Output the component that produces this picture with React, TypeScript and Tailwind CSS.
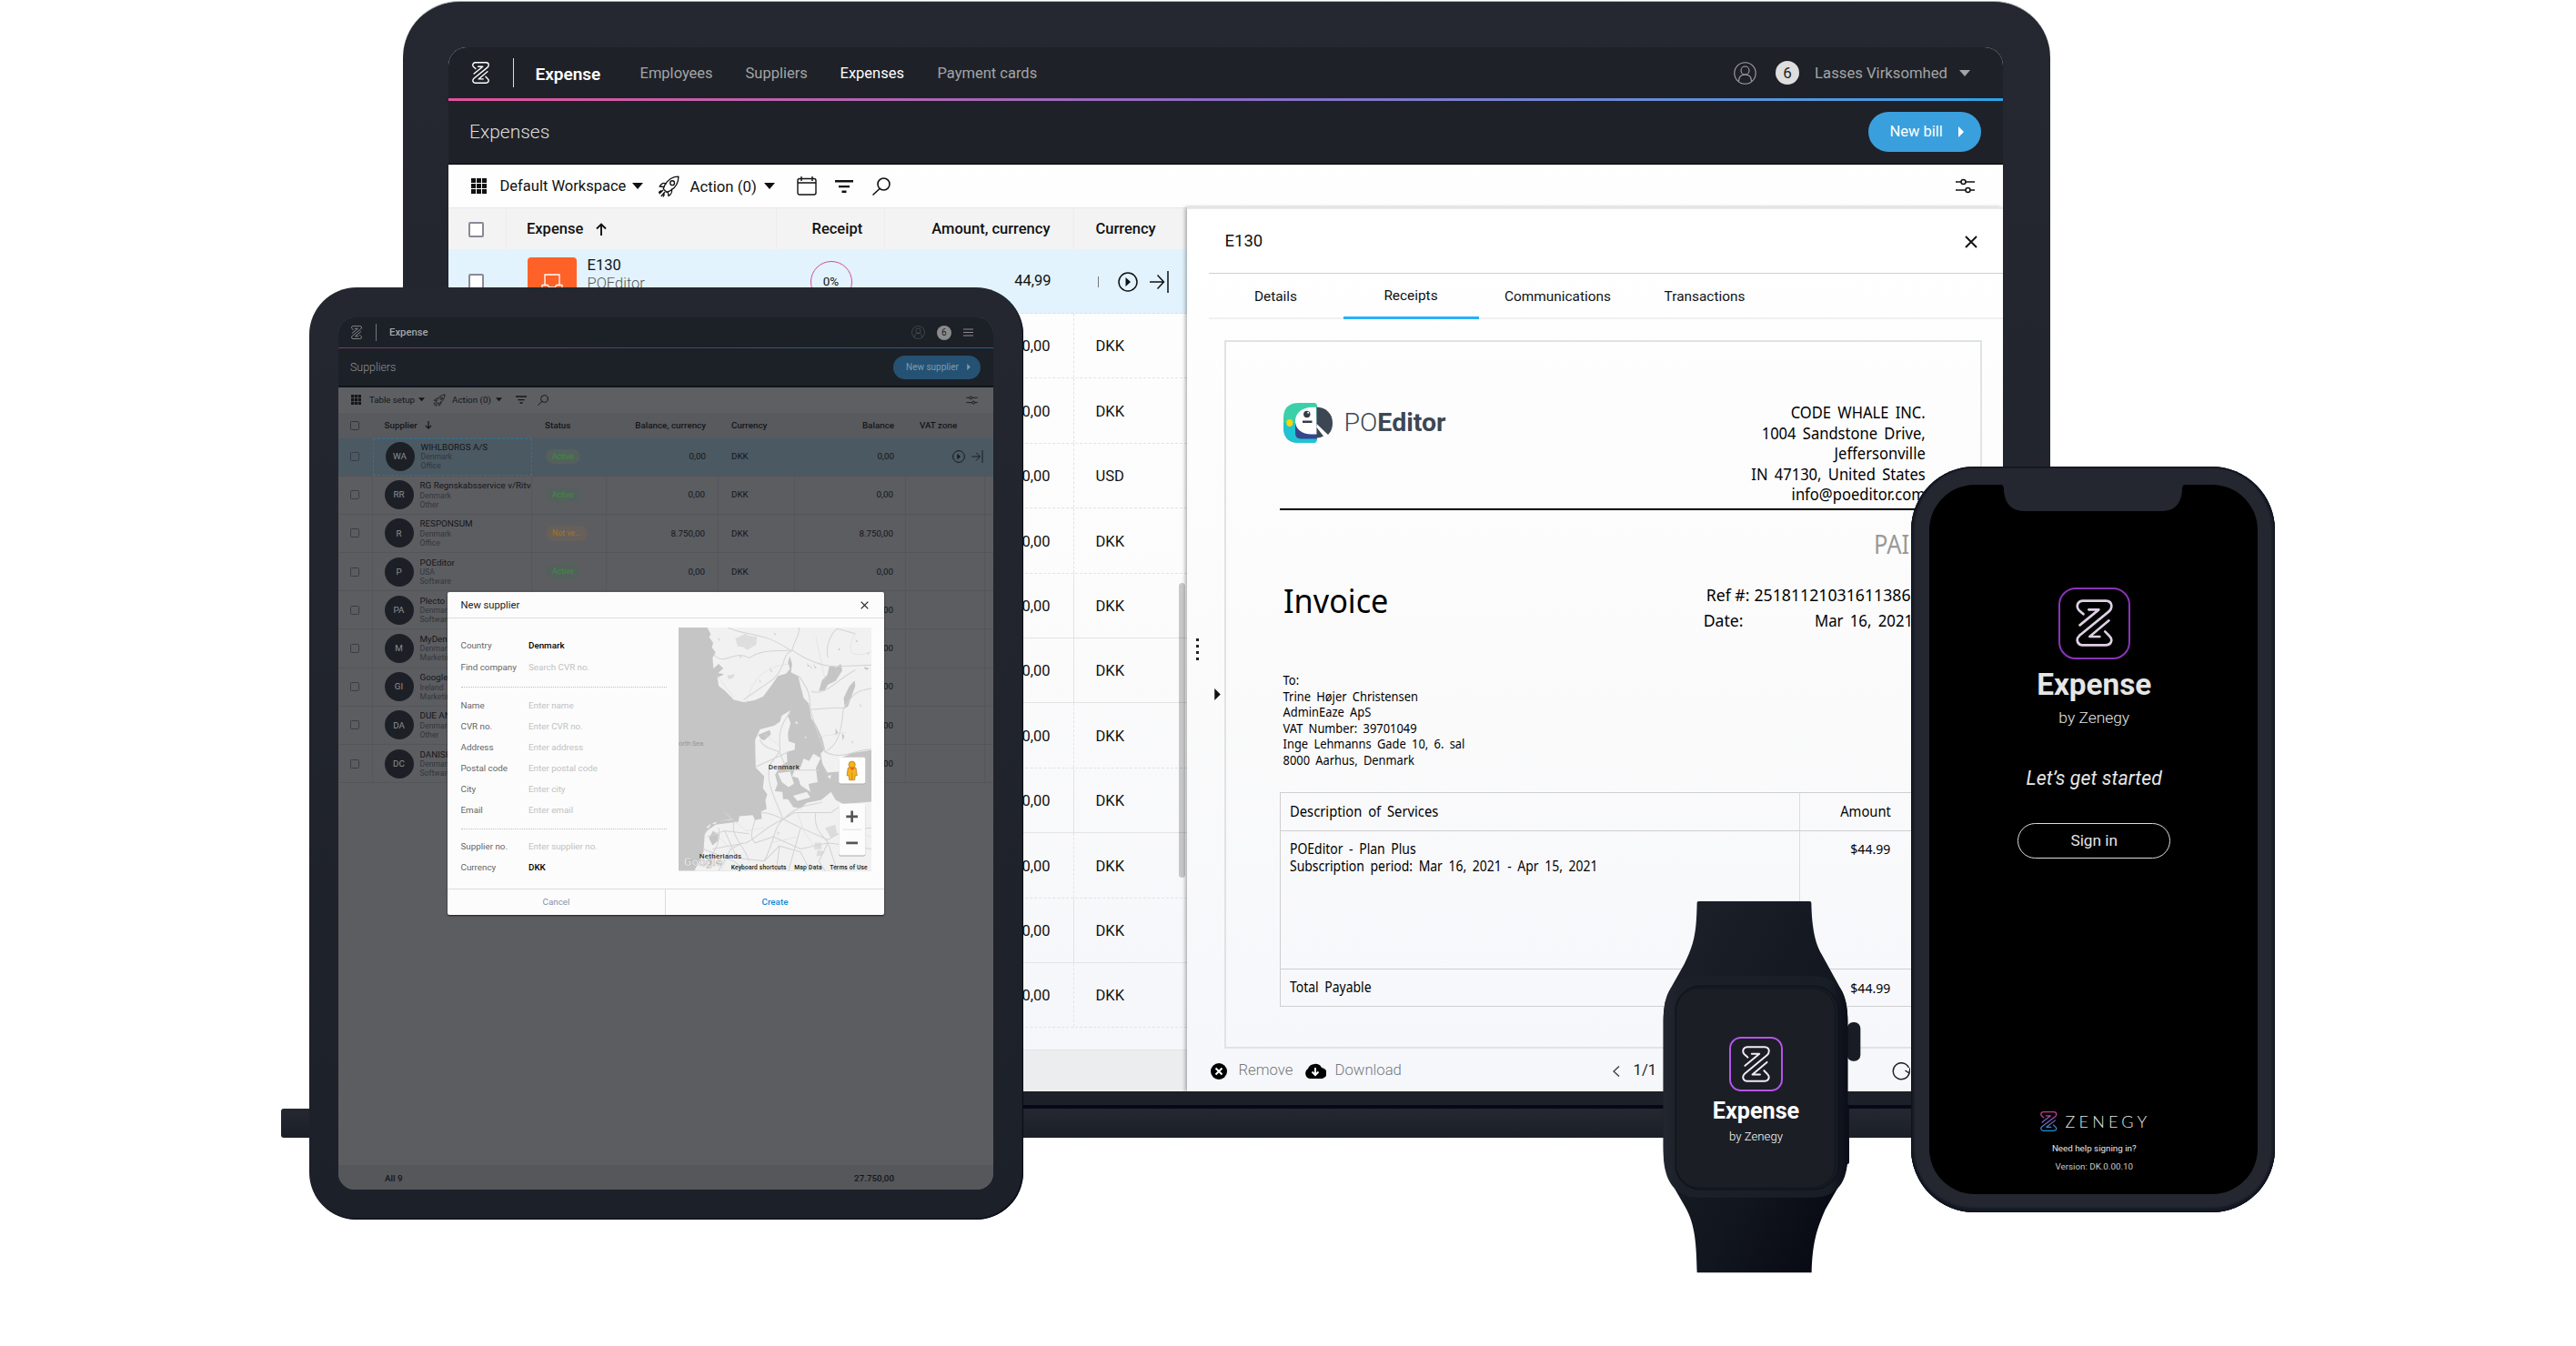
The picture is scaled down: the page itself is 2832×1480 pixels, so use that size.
import React from "react";

type P = { className?: string };

function ZMark({ className, stroke = "currentColor", width = 8 }: P & { stroke?: string; width?: number }) {
  return (
    <svg viewBox="636 507 126 156" preserveAspectRatio="none" className={className} fill="none" stroke={stroke} strokeWidth={width} strokeLinecap="round" strokeLinejoin="round">
      <defs>
        <linearGradient id="zenegy" gradientUnits="userSpaceOnUse" x1="0" y1="510" x2="0" y2="660">
          <stop offset="0" stopColor="#d6308a" />
          <stop offset="0.5" stopColor="#7a5fc0" />
          <stop offset="1" stopColor="#1a93dc" />
        </linearGradient>
      </defs>
      <path d="M662 556L647 543Q641 537 641 529Q643 513 660 512H738Q756 513 757 528Q757 540 748 547L649 626Q641 633 641 642Q643 657 658 658H738Q755 657 757 642Q757 634 749 627L735 613" />
      <path d="M680 541H714L650 592M748 577L683 630H717" />
    </svg>
  );
}

const GridDots = ({ className }: P) => (
  <svg viewBox="0 0 17 17" className={className} fill="currentColor">
    {[0, 6, 12].map((x) => [0, 6, 12].map((y) => <rect key={`${x}-${y}`} x={x} y={y} width="5" height="5" />))}
  </svg>
);
const Caret = ({ className }: P) => (
  <svg viewBox="0 0 12 7" className={className} fill="currentColor"><path d="M0 0H12L6 7Z" /></svg>
);
const CaretRight = ({ className }: P) => (
  <svg viewBox="0 0 6 12" className={className} fill="currentColor"><path d="M0 0V12L6 6Z" /></svg>
);
const Rocket = ({ className }: P) => (
  <svg viewBox="0 0 24 24" className={className} fill="none" stroke="currentColor" strokeWidth="1.3" strokeLinejoin="round" strokeLinecap="round">
    <path d="M22 2C16 2 11 5 7.5 11L6 15l3.500 3.500L13.500 17C19.500 13.500 22 8 22 2Z" />
    <circle cx="15.500" cy="8.800" r="2.300" />
    <path d="M9 9.500C6 8.500 4.500 9 2 12.500l4.500.5M14.800 15.500c.8 3 .2 4.500-3.300 7l-.7-4.500M5.500 16.500 2 20M7.500 18.500 4 22.500M3.500 17 1.500 18.500M7 21l-1 2" />
  </svg>
);
const Filter = ({ className }: P) => (
  <svg viewBox="0 0 20 14" className={className} fill="currentColor"><path d="M0 0H20V2.400H0ZM4 6H16V8.200H4ZM7.500 11.500H12.500V14H7.500Z" /></svg>
);
const Search = ({ className }: P) => (
  <svg viewBox="0 0 20 20" className={className} fill="none" stroke="currentColor" strokeWidth="1.600" strokeLinecap="round"><circle cx="12.500" cy="7.500" r="6.500" /><path d="M8 12.500 1 19" /></svg>
);
const Calendar = ({ className }: P) => (
  <svg viewBox="0 0 22 21" className={className} fill="none" stroke="currentColor" strokeWidth="1.400"><rect x="1" y="2.500" width="20" height="17.500" rx="2" /><path d="M1 7H21M5 0V5M17 0V5" /></svg>
);
const Sliders = ({ className }: P) => (
  <svg viewBox="0 0 21 17" className={className} fill="none" stroke="currentColor" strokeWidth="1.500"><path d="M0 4H6M11 4H21M0 13H11M16 13H21" /><circle cx="8.500" cy="4" r="2.500" /><circle cx="13.500" cy="13" r="2.500" /></svg>
);
const User = ({ className }: P) => (
  <svg viewBox="0 0 25 25" className={className} fill="none" stroke="currentColor" strokeWidth="1.100"><circle cx="12.500" cy="12.500" r="11.700" /><circle cx="12.500" cy="9.500" r="4.500" /><path d="M5.500 21.500C5.500 17 8 14 12.500 14s7 3 7 7.500" /></svg>
);
const Play = ({ className }: P) => (
  <svg viewBox="0 0 22 22" className={className} fill="none" stroke="currentColor" strokeWidth="1.500"><circle cx="11" cy="11" r="10" /><path d="M8.500 6V16L14 11Z" fill="currentColor" stroke="none" /></svg>
);
const ArrowEnd = ({ className }: P) => (
  <svg viewBox="0 0 21 24" className={className} fill="none" stroke="currentColor" strokeWidth="1.500"><path d="M0 12H15M8.500 4.500 15.500 12 8.500 19.500M20 0V24" /></svg>
);
const ArrowUp = ({ className }: P) => (
  <svg viewBox="0 0 12 14" className={className} fill="none" stroke="currentColor" strokeWidth="1.900"><path d="M6 14V1.500M1 6.500 6 1.500 11 6.500" /></svg>
);
const Cross = ({ className }: P) => (
  <svg viewBox="0 0 14 14" className={className} fill="none" stroke="currentColor" strokeWidth="1.900"><path d="M1 1 13 13M13 1 1 13" /></svg>
);

const LaptopRow = ({ currency, solid }: { currency: string; solid: boolean }) => (
  <div className={`flex h-[71.400px] shrink-0 items-center border-b border-[#e3e3e4] ${solid ? "border-solid" : "border-dashed"}`}>
    <div className={`flex h-full w-[688px] items-center justify-end border-r border-[#e3e3e4] pt-[3px] pr-[25px] ${solid ? "border-solid" : "border-dashed"}`}>0,00</div>
    <div className="pt-[3px] pl-[24px]">{currency}</div>
  </div>
);

function Invoice() {
  return (
    <div className="mt-[23px] ml-[41px] flex h-[779px] w-[833px] flex-col border-2 border-[#e0e3e3] pr-[64px] pl-[59px] font-['Noto_Sans',sans-serif] text-black [word-spacing:0.2em]">
      <div className="flex h-[185px] justify-between border-b-[2.500px] border-black pl-[4px]">
        <div className="mt-[67px] flex h-[44px] items-center font-['Roboto',sans-serif] text-[28.500px] text-[#3d4753]">
          <svg viewBox="0 0 54 44" className="mr-[13px] h-[44px] w-[54px]">
            <path d="M34 0H17Q0 0 0 17V27Q0 44 17 44H33Q37 44 37 39V4Q37 0 34 0Z" fill="#3bd0a8" />
            <path d="M0 22V27Q0 44 17 44H33Q37 44 37 39V22Z" fill="#1fc3d3" />
            <path d="M13 22H37V39.500H19Q13 39.500 13 33Z" fill="#36458d" />
            <path d="M36 5C23 3 13 10 13 20C13 29 21 35 32 34.500L37 34.500Z" fill="#fff" />
            <path d="M36.500 4.500C47 5 54 12 54 22C54 28 52 32 49 35L36.500 23Z" fill="#3d4753" />
            <path d="M36.500 27 44 36.500Q41 38.500 36.500 38.500Z" fill="#3d4753" />
            <circle cx="25.800" cy="12.500" r="3.700" fill="#333e48" />
            <circle cx="27.200" cy="10.800" r="1" fill="#fff" />
            <path d="M21 19.500H31.500V22H21Z" fill="#333e48" />
            <ellipse cx="6.800" cy="22" rx="3.500" ry="4" fill="#ffd400" />
          </svg>
          <span className="font-light">PO</span>
          <span className="font-bold">Editor</span>
        </div>
        <div className="mt-[66px] mr-[-4px] origin-right scale-x-90 text-right text-[18.400px] leading-[22.600px]">
          CODE WHALE INC.<br />1004 Sandstone Drive,<br />Jeffersonville<br />IN 47130, United States<br />info@poeditor.com
        </div>
      </div>
      <div className="flex justify-between pl-[4px]">
        <div className="mt-[77px] h-[88px] origin-left scale-x-[0.925] text-[37px] leading-[44px]">Invoice</div>
        <div className="flex w-[240px] shrink-0 flex-col text-[17.700px] [word-spacing:normal]">
          <div className="mt-[18px] h-[38px] w-[80px] origin-left translate-x-[187px] scale-x-[0.880] text-[29px] leading-[38px] text-[#999]">PAID</div>
          <div className="mt-[23px] flex h-[28px] items-center leading-[28px]"><span className="w-[51px] text-right">Ref #:</span><span className="pl-[5px]">25181121031611386</span></div>
          <div className="flex h-[28px] items-center leading-[28px]"><span className="w-[51px] text-right">Date:</span><span className="origin-left scale-x-95 pl-[82px] [word-spacing:3px]">Mar 16, 2021</span></div>
        </div>
      </div>
      <div className="mt-[13px] h-[132px] origin-left scale-x-90 pl-[4px] text-[14.300px] leading-[17.600px]">
        To:<br />Trine Højer Christensen<br />AdminEaze ApS<br />VAT Number: 39701049<br />Inge Lehmanns Gade 10, 6. sal<br />8000 Aarhus, Denmark
      </div>
      <div className="h-[236px] border border-[#cfcfd0] text-[15.500px]">
        <div className="flex h-[42px] items-center border-b border-[#cfcfd0] text-[16.400px]"><span className="w-[570px] pl-[10px]"><span className="inline-block origin-left scale-x-90">Description of Services</span></span><span className="flex h-full w-[132px] items-center justify-end border-l border-[#dcdcdd] pr-[31px]"><span className="origin-right scale-x-90">Amount</span></span></div>
        <div className="flex h-[152px] border-b border-[#cfcfd0]"><span className="w-[570px] pt-[10px] pl-[10px] leading-[18.500px]"><span className="inline-block origin-left scale-x-90">POEditor - Plan Plus<br />Subscription period: Mar 16, 2021 - Apr 15, 2021</span></span><span className="w-[132px] border-l border-[#dcdcdd] pt-[12px] pr-[31px] text-right text-[14.800px]"><span className="inline-block origin-right scale-x-95">$44.99</span></span></div>
        <div className="flex h-[40px] items-center"><span className="w-[570px] pl-[10px]"><span className="inline-block origin-left scale-x-90">Total Payable</span></span><span className="w-[132px] pr-[31px] text-right text-[14.800px]"><span className="inline-block origin-right scale-x-95">$44.99</span></span></div>
      </div>
    </div>
  );
}

function Laptop() {
  const rows = ["DKK", "DKK", "USD", "DKK", "DKK", "DKK", "DKK", "DKK", "DKK", "DKK", "DKK"];
  return (
    <>
      <div className="absolute top-px left-[443px] h-[1218px] w-[1811px] rounded-t-[62px] border-t border-[#a9b4b4] bg-linear-to-b from-[#252830] to-[#1c2029]" />
      <div className="absolute top-[1215px] left-[443px] h-[4px] w-[1800px] bg-[#060a18]" />
      <div className="absolute top-[1219px] left-[309px] h-[32px] w-[1900px] rounded-[3px] bg-linear-to-b from-[#252830] to-[#1b1f28]" />
      <div className="absolute top-[52px] left-[492.500px] isolate flex h-[1148px] w-[1709.500px] flex-col overflow-hidden rounded-t-[20px] bg-linear-to-b from-white via-[#fcfcfc] to-[#f5f6fa] text-[16.500px] leading-none whitespace-nowrap text-[#111]">
        <div className="flex h-[56px] shrink-0 items-center bg-[#1e2127] text-[#a3a4a6]">
          <ZMark className="ml-[26px] h-[24px] w-[19px] text-white" width={9} />
          <div className="ml-[26px] h-[32px] w-px bg-[#ddd]" />
          <div className="ml-[24px] grid grid-cols-[115px_116px_104px_107px_120px] items-center pt-[2px]">
            <span className="text-[19px] font-semibold text-white">Expense</span>
            <span>Employees</span><span>Suppliers</span><span className="text-white">Expenses</span><span>Payment cards</span>
          </div>
          <div className="mr-[36px] ml-auto flex items-center">
            <User className="size-[25px]" />
            <span className="mr-[17px] ml-[21px] flex size-[26px] items-center justify-center rounded-full bg-[#dedede] pt-px text-[17px] text-[#222]">6</span>
            <span className="pt-[2px] text-[16.700px]">Lasses Virksomhed</span>
            <Caret className="ml-[13px] h-[7px] w-[12px]" />
          </div>
        </div>
        <div className="h-[2.500px] shrink-0 bg-linear-to-r from-[#e3509c] via-[#8a6cc5] to-[#2ba3e8]" />
        <div className="flex h-[70.500px] shrink-0 items-center justify-between border-b border-black bg-[#1e2127] pr-[24px] pl-[23.500px]">
          <span className="pt-px text-[21px] font-light text-[#dedede]">Expenses</span>
          <span className="flex h-[44px] w-[124px] items-center rounded-full bg-[#3a9fdd] pl-[23.500px] text-white">New bill<CaretRight className="ml-[17px] h-[12px] w-[6px]" /></span>
        </div>
        <div className="flex h-[47px] shrink-0 items-center pl-[25px] [&>span]:pt-[2px]">
          <GridDots className="size-[17px]" />
          <span className="w-[146px] pl-[15px]">Default Workspace</span>
          <Caret className="ml-[14px] h-[7px] w-[12px]" />
          <Rocket className="ml-[16px] size-[25px]" />
          <span className="w-[88px] pl-[11px] text-[16.800px]">Action (0)</span>
          <Caret className="ml-[4px] h-[7px] w-[12px]" />
          <Calendar className="ml-[24px] h-[21px] w-[22px]" />
          <Filter className="ml-[20px] h-[14px] w-[20px]" />
          <Search className="ml-[21px] size-[20px]" />
          <Sliders className="mr-[31px] ml-auto h-[17px] w-[21px]" />
        </div>
        <div className="flex h-[972px] shrink-0">
          <div className="relative flex w-[812px] flex-col overflow-hidden">
            <div className="grid h-[46px] shrink-0 grid-cols-[64px_297px_119px_208px_124px] items-center divide-x divide-[#ededed] border-t border-[#e8e8e8] bg-[#f3f3f3] font-medium *:flex *:h-full *:items-center *:pt-px">
              <span className="pl-[22px]"><i className="size-[17px] rounded-[2px] border-2 border-[#8b8998] bg-white" /></span>
              <span className="pl-[22.500px]">Expense<ArrowUp className="ml-[14px] h-[14px] w-[12px]" /></span>
              <span className="pl-[39px]">Receipt</span>
              <span className="justify-end pr-[25px]">Amount, currency</span>
              <span className="pl-[24px]">Currency</span>
            </div>
            <div className="grid h-[71px] shrink-0 grid-cols-[64px_297px_119px_208px_124px] items-center border-b border-dashed border-[#d5e3ea] bg-[#e2f3fd] pt-px">
              <span className="pl-[22px]"><i className="block size-[17px] rounded-[2px] border-2 border-[#8b8998] bg-white" /></span>
              <span className="flex items-center pl-[23px]">
                <span className="flex size-[54px] items-center justify-center rounded-[4px] bg-[#ff6229]">
                  <svg viewBox="0 0 24 24" className="mt-[4px] size-[24px] text-white" fill="none" stroke="currentColor" strokeWidth="1.300"><path d="M4 13V2H20V13M1 13.500H7L9 16H15L17 13.500H23V23H1Z" /></svg>
                </span>
                <span className="ml-[12px] flex flex-col gap-[3px] pb-[15px]"><span>E130</span><span className="font-light text-[#555]">POEditor</span></span>
              </span>
              <span className="ml-[37px] flex size-[46px] items-center justify-center rounded-full border-[1.500px] border-[#d6479a] text-[13.500px]">0%</span>
              <span className="pr-[25px] text-right">44,99</span>
              <span className="flex items-center pl-[26px]"><i className="h-[12px] w-px bg-[#777]" /><Play className="ml-[21px] size-[22px]" /><ArrowEnd className="ml-[13px] h-[24px] w-[21px]" /></span>
            </div>
            {rows.map((c, i) => <LaptopRow key={i} currency={c} solid={[4, 5, 7, 9].includes(i)} />)}
            <div className="mt-[24px] flex-1 border-t border-[#e4e4e6] bg-[#ecedef]" />
            <div className="absolute top-[413px] right-[2px] h-[324px] w-[7px] rounded-full bg-black/20" />
          </div>
          <div className="z-10 flex w-[897.500px] flex-col border-t-2 border-[#e9e9e9] bg-linear-to-b from-white via-[#fbfbfb] to-[#f6f7fb] shadow-[-2px_0_4px_rgba(0,0,0,0.3)]">
            <div className="ml-[24px] flex h-[71px] shrink-0 items-center justify-between border-b border-[#d0d0d0] pt-px pr-[28px] pl-[18px] text-[18.500px]">E130<Cross className="size-[14px]" /></div>
            <div className="ml-[24px] grid h-[50px] shrink-0 grid-cols-[148px_149px_174px_149px] items-center border-b-2 border-[#f0f0f0] text-center text-[15.400px] *:pt-[3px]">
              <span>Details</span>
              <span className="mb-[-2px] flex h-[50px] items-center justify-center border-b-[3px] border-[#29b0fc]">Receipts</span>
              <span>Communications</span><span>Transactions</span>
            </div>
            <div className="relative">
              <Invoice />
              <div className="absolute top-[351px] left-[10px] flex flex-col gap-[4px]">{[0, 1, 2, 3].map((k) => <i key={k} className="size-[3px] bg-[#222]" />)}</div>
              <CaretRight className="absolute top-[406px] left-[30px] h-[13px] w-[7px]" />
            </div>
            <div className="flex flex-1 items-center pt-[2px] pl-[26px] text-[16.700px] text-[#777]">
              <svg viewBox="0 0 18 18" className="size-[18px]"><circle cx="9" cy="9" r="9" fill="#000" /><path d="M5.500 5.500 12.500 12.500M12.500 5.500 5.500 12.500" stroke="#fff" strokeWidth="2" /></svg>
              <span className="w-[85px] pl-[13px] font-light">Remove</span>
              <svg viewBox="0 0 24 17" className="h-[17px] w-[24px]"><path d="M6 17A6 6 0 0 1 4 6 8 7 0 0 1 19 5 6 6 0 0 1 18 17Z" fill="#000" /><path d="M12 5V12M8.500 9.500 12 13 15.500 9.500" stroke="#fff" strokeWidth="2" fill="none" /></svg>
              <span className="w-[315px] pl-[10px] font-light">Download</span>
              <svg viewBox="0 0 8 12" className="h-[12px] w-[8px]" fill="none" stroke="#444" strokeWidth="1.500"><path d="M7 0.500 1 6 7 11.500" /></svg>
              <span className="pl-[15px] text-[#222]">1/1</span>
              <svg viewBox="0 0 20 20" className="ml-[259px] size-[20px]" fill="none" stroke="#222" strokeWidth="1.500"><path d="M18.500 6A9 9 0 1 0 19 12M14.500 9 19 12 20 6" /></svg>
            </div>
          </div>
        </div>
      </div>
    </>
  );
}

const suppliers = [
  ["WA", "WIHLBORGS A/S", "Denmark", "Office", "Active", "0,00"],
  ["RR", "RG Regnskabsservice v/Ritva", "Denmark", "Other", "Active", "0,00"],
  ["R", "RESPONSUM", "Denmark", "Office", "Not ve...", "8.750,00"],
  ["P", "POEditor", "USA", "Software", "Active", "0,00"],
  ["PA", "Plecto", "Denmark", "Software", "", "0,00"],
  ["M", "MyDenmark", "Denmark", "Marketing", "", "0,00"],
  ["GI", "Google Ireland", "Ireland", "Marketing", "", "0,00"],
  ["DA", "DUE AND", "Denmark", "Other", "", "0,00"],
  ["DC", "DANISH", "Denmark", "Software", "", "0,00"],
];

function MapView() {
  return (
    <svg viewBox="18 30 635 802" preserveAspectRatio="none" className="h-[267.500px] w-[212px]" fontFamily="Roboto, sans-serif">
      <path d="M18 30H653V832H18Z" fill="#c5c5c5" />
      <g fill="#f1f1f1">
        <path d="M112 30L124 52 119 62 132 80 128 96 140 112 130 130 133 165 150 150 165 165 148 180 168 184 146 196 150 222 172 240 200 268 232 276 268 270 296 258 328 215 345 190 372 182 385 166 378 146 384 125 392 150 388 178 412 190 420 225 430 262 447 280 455 330 470 350 490 392 500 430 486 446 492 480 508 508 545 505 548 462 590 444 653 434V30Z" />
        <path d="M387 303L377 320 387 345 378 378 380 405 402 412 400 433 374 440 376 472 352 488 336 516 344 545 335 570 360 572 362 596 378 596 396 622 420 626 440 608 488 598 520 572 535 598 560 612 653 604V832H70L100 770 104 712 112 700 140 680 215 670 218 652 262 648 270 665 292 660 290 636 308 628 304 600 310 580 296 560 300 520 272 492 270 400 286 366 332 354 352 340 358 320Z" />
        <path d="M345 510L385 505 398 545 380 556 358 540ZM400 500L420 490 430 462 448 470 462 446 486 460 470 494 476 540 446 546 452 572 420 550 412 526 392 520ZM395 585L440 572 452 590 410 602ZM402 340L412 342 406 349ZM433 390L440 392 436 396ZM508 520L520 516 518 530Z" />
        <path d="M108 690L125 676 118 690ZM150 668L200 660 190 664ZM128 676L144 670 138 678Z" />
      </g>
      <g fill="#c5c5c5">
        <path d="M480 240L490 205 508 186 514 160 528 156 536 162 552 150 557 172 535 206 510 218 500 236ZM565 296L562 262 580 224 598 205 600 222 590 250 576 290ZM118 724L132 700 150 712 148 732 130 748ZM280 384L318 368 322 382 300 402 290 398ZM630 160l14 4-4 6-10-4Z" />
        <path d="M205 66L238 50 250 58 276 60 274 86 244 104 230 94 212 92Z" fill="#dedede" />
        <path d="M178 188L204 184 196 198 182 200ZM466 740L486 738 490 760 466 762ZM500 690L534 680 540 710 520 724ZM340 702L352 706 346 714ZM476 764l24 4-10 14-18 2Z" fill="#dcdcdc" />
        <path d="M148 60l6 14-4-2ZM218 120l8 10-5-1ZM318 160l8 18-5-3ZM440 146l9 12-4 2ZM450 152l8 14-4-2ZM462 150l10 14-5 0ZM535 362l8 14-8 10ZM556 378l8 10-6 14ZM600 70l9 6-5 2ZM640 110l6 8-5 0ZM330 46l10 8-5 1ZM615 280l6 12-5-3ZM588 400l6 12-5-3ZM284 200l6 12-5-3ZM545 96l6 8-6 0Z" />
      </g>
      <g fill="none" stroke="#d3d3d3" strokeWidth="3">
        <path d="M392 104C400 70 420 50 414 30M392 104C440 140 500 160 540 158L653 154M414 190C450 240 450 250 452 300C500 300 520 290 566 296M452 300C470 370 490 410 500 440C540 420 555 380 560 300C600 230 620 240 653 230M392 104C350 130 380 150 330 200L232 268M500 440C560 470 600 430 653 432M455 240C500 260 540 200 600 170M392 104C330 110 300 100 250 130C200 100 170 160 135 120M392 110C300 40 240 60 180 30M510 130C500 90 520 50 540 34L600 50" />
        <path d="M385 310C330 380 360 420 350 440L376 500M285 400C300 430 330 430 350 440L320 480C300 540 340 600 362 662M380 440L270 490M362 662C320 640 300 640 290 640M362 662C420 610 440 620 490 606M376 500H480M362 662L420 690 510 730 560 700M362 662C330 690 340 720 300 800M362 662L400 640 520 640 548 620M362 662C300 690 280 720 240 740L130 760M270 664C260 700 250 720 270 740L330 720 420 760 510 740 653 760M200 672C190 720 230 740 250 800M110 720L170 700 250 710M150 690C160 740 130 780 100 820M300 800L350 750 420 770 450 830M340 832L350 750M170 700L210 790 300 800M470 640C460 700 500 720 510 740L540 830M420 690L400 760 380 832M560 700L653 690M100 760L200 800 240 832M510 740L480 800 500 832M230 740L190 760 150 832" />
      </g>
      <g fill="none" stroke="#dedede" strokeWidth="2"><path d="M145 190L200 260M240 280C260 200 300 160 380 150M470 60L500 200M600 50C560 120 600 130 653 110M480 390L570 376M300 380L350 420M170 640L240 700 300 690M130 700L190 760 160 830M410 640L430 700 470 760M320 740L410 720M580 620L600 700 653 720" /></g>
      <g fontSize="24" fill="#333" fontWeight="500">
        <text x="18" y="419" fill="#999" fontWeight="400" textLength="82">orth Sea</text>
        <text x="314" y="499" textLength="102">Denmark</text>
        <text x="35" y="816" fontSize="38" fill="#fff" stroke="#aaa" strokeWidth="1.500" textLength="126">Google</text>
        <text x="86" y="791" textLength="139">Netherlands</text>
        <g fontSize="20" fill="#111"><text x="191" y="827" textLength="182">Keyboard shortcuts</text><text x="399" y="827" textLength="91">Map Data</text><text x="516" y="827" textLength="124">Terms of Use</text></g>
      </g>
      <rect x="546" y="461" width="87" height="86" rx="5" fill="#aaa" />
      <rect x="546" y="458" width="87" height="86" rx="5" fill="#fff" />
      <rect x="546" y="614" width="87" height="170" rx="5" fill="#aaa" />
      <rect x="546" y="611" width="87" height="170" rx="5" fill="#fcfcfc" />
      <path d="M558 696H621" stroke="#e0e0e0" strokeWidth="3" />
      <path d="M570 653H608M589 634V672M570 740H608" stroke="#555" strokeWidth="8" />
      <g fill="#f7b21b" stroke="#a87818" strokeWidth="2"><path d="M576 492H602L606 518H600L598 533H580L578 518H572Z" /><circle cx="589" cy="482" r="11" /></g>
      <path d="M582 491L590 502 598 491Z" fill="#e5602b" />
      <path d="M589 508V532" stroke="#a87818" strokeWidth="2" />
    </svg>
  );
}

const Field = ({ label, value, strong, h }: { label: string; value: string; strong?: boolean; h: string }) => (
  <div className={`grid grid-cols-[74.500px_1fr] items-center ${h}`}><span className="text-[#666]">{label}</span><span className={strong ? "font-medium text-black" : "text-[#c2c2c2]"}>{value}</span></div>
);

function Modal() {
  return (
    <div className="absolute top-[302px] left-[120px] flex h-[355px] w-[480px] flex-col rounded-[2px] bg-[#fcfcfc] text-[9.800px] text-[#222] shadow-[0_1px_2px_rgba(0,0,0,0.7)]">
      <div className="flex h-[28.500px] items-center justify-between border-b border-[#dcdcdc] pt-px pr-[17px] pl-[14.500px] text-[11.200px]">New supplier<Cross className="size-[9px]" /></div>
      <div className="flex h-[298px] border-b border-[#dcdcdc] pt-[10.500px] pl-[14.500px]">
        <div className="w-[239.500px] pt-[8px] pr-[13.500px]">
          <Field label="Country" value="Denmark" strong h="h-[24px]" />
          <Field label="Find company" value="Search CVR no." h="h-[24px]" />
          <div className="mt-[9px] mb-[8.500px] border-t border-dotted border-[#c0c0c0]" />
          <Field label="Name" value="Enter name" h="h-[22.900px]" />
          <Field label="CVR no." value="Enter CVR no." h="h-[22.900px]" />
          <Field label="Address" value="Enter address" h="h-[22.900px]" />
          <Field label="Postal code" value="Enter postal code" h="h-[22.900px]" />
          <Field label="City" value="Enter city" h="h-[22.900px]" />
          <Field label="Email" value="Enter email" h="h-[22.900px]" />
          <div className="mt-[9px] mb-[8px] border-t border-dotted border-[#c0c0c0]" />
          <Field label="Supplier no." value="Enter supplier no." h="h-[23px]" />
          <Field label="Currency" value="DKK" strong h="h-[23px]" />
        </div>
        <MapView />
      </div>
      <div className="grid flex-1 grid-cols-2 items-center divide-x divide-[#dcdcdc] text-center *:flex *:h-full *:items-center *:justify-center">
        <span className="text-[#8d90a3]">Cancel</span><span className="font-medium text-[#1089d6]">Create</span>
      </div>
    </div>
  );
}

const tabletCols = "grid-cols-[37.500px_175.500px_82px_123px_84px_122px_87px_9px]";

function Tablet() {
  return (
    <div className="absolute top-[316px] left-[340px] h-[1024.500px] w-[785px] rounded-[52px] bg-linear-to-b from-[#24272f] to-[#1c2029] pt-[33px] pl-[32px] shadow-[inset_-1px_-1px_1px_#060a14]">
      <div className="relative flex h-[959px] w-[720px] flex-col overflow-hidden rounded-[18px] bg-[#5c5d61] text-[9.800px] leading-none whitespace-nowrap text-[#14161a]">
        <div className="flex h-[32.500px] shrink-0 items-center bg-[#1c2027] pt-px text-[#8a8c8f]">
          <ZMark className="ml-[14px] h-[15px] w-[12px]" width={10} />
          <i className="ml-[15px] h-[19px] w-px bg-[#777]" />
          <span className="ml-[14px] text-[11.300px] font-medium text-[#a5a6a8]">Expense</span>
          <User className="ml-auto size-[15px] text-[#55585d]" />
          <span className="mx-[13.500px] flex size-[15.500px] items-center justify-center rounded-full bg-[#8a8b8d] text-[10px] text-[#1c2027]">6</span>
          <svg viewBox="0 0 11 9" className="mr-[22px] h-[9px] w-[11px]" stroke="currentColor" strokeWidth="1.200"><path d="M0 1H11M0 4.500H11M0 8H11" /></svg>
        </div>
        <div className="h-[1.500px] shrink-0 bg-linear-to-r from-[#7d3962] via-[#47456f] to-[#1f628b]" />
        <div className="flex h-[42.500px] shrink-0 items-center justify-between border-b-2 border-[#11141a] bg-[#1c2027] pt-px pr-[14px] pl-[13px]">
          <span className="text-[12.400px] font-light text-[#909295]">Suppliers</span>
          <span className="flex h-[26.500px] w-[96px] items-center rounded-full bg-[#255273] pl-[14px] text-[10px] text-[#7e9bad]">New supplier<CaretRight className="ml-[9px] h-[7px] w-[4px]" /></span>
        </div>
        <div className="flex h-[28px] shrink-0 items-center bg-[#5e5f63] pl-[14px]">
          <GridDots className="size-[11px]" />
          <span className="w-[63px] pl-[9px] text-[9.700px]">Table setup</span><Caret className="h-[4.500px] w-[7px]" />
          <Rocket className="ml-[9px] size-[14px]" />
          <span className="w-[55px] pl-[7px]">Action (0)</span><Caret className="h-[4.500px] w-[7px]" />
          <Filter className="ml-[15px] h-[9px] w-[12px]" />
          <Search className="ml-[12px] size-[12px]" />
          <Sliders className="mr-[17px] ml-auto h-[10px] w-[13px]" />
        </div>
        <div className={`grid h-[28px] shrink-0 items-center bg-[#595a5e] font-medium ${tabletCols}`}>
          <span className="pl-[13px]"><i className="block size-[10px] rounded-[1.500px] border border-[#33343d]" /></span>
          <span className="flex items-center pl-[13px]">Supplier<ArrowUp className="ml-[8px] h-[9px] w-[8px] rotate-180" /></span>
          <span className="pl-[14px]">Status</span>
          <span className="pr-[14px] text-right">Balance, currency</span>
          <span className="pl-[14px]">Currency</span>
          <span className="pr-[13px] text-right">Balance</span>
          <span className="pl-[15px]">VAT zone</span>
        </div>
        {suppliers.map(([ini, name, country, kind, status, amount], i) => (
          <div key={ini} className={`grid h-[42.200px] shrink-0 items-center border-b border-[#54555a] ${tabletCols} ${i === 0 ? "bg-[#4b5963]" : "divide-x divide-[#56575c]"} *:h-full *:content-center`}>
            <span className="pl-[13px]"><i className="block size-[10px] rounded-[1.500px] border border-[#3a3b45]" /></span>
            <span className={`flex items-center overflow-hidden pl-[13px] ${i === 0 ? "border border-dashed border-[#26759f]" : ""}`}>
              <span className="flex size-[32px] shrink-0 items-center justify-center rounded-full bg-[#1c2026] text-[#8d8f92]">{ini}</span>
              <span className="ml-[7px] flex flex-col gap-[1.500px] text-[8.600px] text-[#34363b]"><span className="text-[9.800px] text-[#14161a]">{name}</span><span>{country}</span><span>{kind}</span></span>
            </span>
            <span className="flex items-center pl-[15px]">{status && <span className={`rounded-full px-[7px] py-[4px] text-[8.700px] ${status === "Active" ? "bg-[#54605c] text-[#36913f]" : "bg-[#67605a] text-[#b0701e]"}`}>{status}</span>}</span>
            <span className="pr-[14px] text-right">{i < 4 && amount}</span>
            <span className="pl-[14px]">{i < 4 && "DKK"}</span>
            <span className="pr-[13px] text-right">{amount}</span>
            <span className="flex items-center justify-end gap-[7px] pr-[2px]">{i === 0 && <><Play className="size-[14px]" /><ArrowEnd className="h-[14px] w-[13px]" /></>}</span>
            <span />
          </div>
        ))}
        <div className="mt-auto flex h-[27px] shrink-0 items-center justify-between bg-[#56575b] pt-[2px] pr-[109px] pl-[51px] font-medium"><span>All 9</span><span>27.750,00</span></div>
        <Modal />
      </div>
    </div>
  );
}

function Watch() {
  return (
    <div className="absolute top-[960px] left-[1780px] h-[450px] w-[340px]">
      <svg viewBox="0 0 1020 1350" className="size-full">
        <defs>
          <linearGradient id="band" x1="0" y1="0" x2="1" y2="1"><stop offset="0" stopColor="#1d212a" /><stop offset="0.600" stopColor="#12161f" /><stop offset="1" stopColor="#05070f" /></linearGradient>
          <linearGradient id="case" x1="0" y1="0" x2="1" y2="0"><stop offset="0" stopColor="#232730" /><stop offset="0.080" stopColor="#1c2029" /><stop offset="0.900" stopColor="#191d26" /><stop offset="1" stopColor="#0b0e18" /></linearGradient>
        </defs>
        <rect x="752" y="492" width="44" height="128" rx="20" fill="#181c24" />
        <rect x="745" y="770" width="14" height="190" rx="6" fill="#0c101a" />
        <path d="M257 97Q258 93 264 93H628Q634 93 634 98C636 200 652 240 668 268L730 380Q755 420 754 500V930Q754 980 735 1015L680 1110C650 1180 638 1220 635 1318H257C255 1220 250 1160 220 1105L170 1018Q146 975 146 900V480Q146 420 170 380L215 300C250 230 255 190 257 97Z" fill="url(#band)" />
        <path d="M250 340H650C725 345 754 395 754 490V930C754 1020 720 1068 640 1070H260C180 1068 146 1010 146 920V490C146 395 175 345 250 340Z" fill="url(#case)" />
        <rect x="186" y="372" width="538" height="672" rx="82" fill="#161a23" stroke="#0c1019" strokeWidth="3" />
        <rect x="188" y="380" width="524" height="658" rx="76" fill="#1b1e24" stroke="#11151e" strokeWidth="2" />
      </svg>
      <div className="absolute top-[180px] left-[100px] flex w-[101px] flex-col items-center leading-none whitespace-nowrap text-white">
        <div className="flex size-[59.500px] items-center justify-center rounded-[13px] border-2 border-[#b455ea]"><ZMark className="h-[40px] w-[31px] text-[#f3ecf7]" /></div>
        <span className="mt-[9px] text-[25.200px] font-bold">Expense</span>
        <span className="mt-[9px] text-[13.200px] font-light">by Zenegy</span>
      </div>
    </div>
  );
}

function Phone() {
  return (
    <div className="absolute top-[513px] left-[2101px] h-[820px] w-[400px] rounded-[70px] bg-[#24272f] pt-[20px] pl-[19.500px] shadow-[inset_0_0_1px_1.500px_#10141f,inset_0_-6px_2px_-1px_#161a25,inset_5px_0_1px_-1px_#1b1f29,inset_-5px_0_1px_-1px_#1b1f29]">
      <div className="relative flex h-[780px] w-[361.500px] flex-col items-center rounded-[50px] bg-black pl-[2px] leading-none whitespace-nowrap text-[#e6e6e6]">
        <svg viewBox="0 0 204 30" className="absolute top-[-1px] left-[78px] h-[30px] w-[204px]"><path d="M0 0H204Q200 1 200 6V8Q198 29.500 178 30H26Q6 29.500 4 8V6Q4 1 0 0Z" fill="#24272f" /></svg>
        <div className="mt-[112.500px] flex size-[79px] items-center justify-center rounded-[19px] border-[2.500px] border-[#8a34b8]"><ZMark className="h-[52px] w-[41px] text-[#dfcfe6]" /></div>
        <span className="mt-[11px] text-[33.300px] font-bold">Expense</span>
        <span className="mt-[12px] text-[17.400px] font-light">by Zenegy</span>
        <span className="mt-[47px] text-[21.200px] tracking-[0.150px] italic">Let’s get started</span>
        <span className="mt-[38.500px] flex h-[39px] w-[168px] items-center justify-center rounded-full border-[1.500px] border-[#dcdcdc] text-[17.300px]">Sign in</span>
        <div className="mt-[278px] flex items-center"><ZMark className="h-[22px] w-[18.500px]" stroke="url(#zenegy)" width={9} /><span className="mr-[-3px] ml-[9px] font-['Lato',sans-serif] text-[18px] font-light tracking-[4.200px]">ZENEGY</span></div>
        <span className="mt-[14px] text-[9.800px]">Need help signing in?</span>
        <span className="mt-[10px] text-[9.800px] text-[#c8c8c8]">Version: DK.0.00.10</span>
      </div>
    </div>
  );
}

export default function App() {
  return (
    <main className="relative h-[1480px] w-[2832px] overflow-hidden bg-white font-['Roboto',sans-serif]">
      <Laptop />
      <Tablet />
      <Watch />
      <Phone />
    </main>
  );
}
